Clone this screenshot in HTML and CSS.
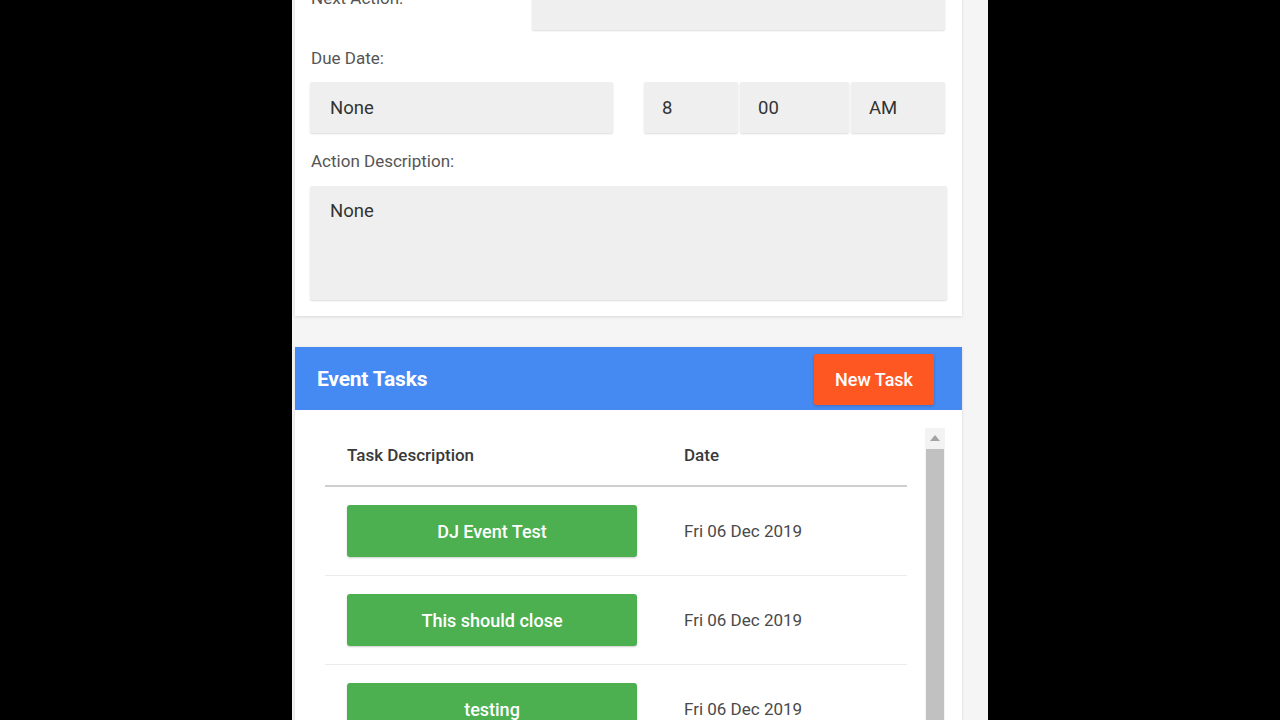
FILE: index.html
```html
<!DOCTYPE html>
<html lang="en">
<head>
  <meta charset="UTF-8" />
  <meta name="viewport" content="width=device-width, initial-scale=1" />
  <title>Event Details</title>
  <link rel="stylesheet" href="styles.css">
</head>
<body>
  <div class="page">
    <div class="stack">

      <section class="card action-card">
        <div class="next-row">
          <label class="field-label inline">Next Action:</label>
          <div class="input next-input"></div>
        </div>

        <label class="field-label">Due Date:</label>
        <div class="due-row">
          <div class="input date-input">None</div>
          <div class="time-group">
            <div class="input time-hour">8</div>
            <div class="input time-min">00</div>
            <div class="input time-ampm">AM</div>
          </div>
        </div>

        <label class="field-label">Action Description:</label>
        <div class="input textarea">None</div>
      </section>

      <section class="card tasks-card">
        <header class="tasks-head">
          <h2>Event Tasks</h2>
          <button class="new-task-btn">New Task</button>
        </header>

        <div class="tasks-body">
          <div class="table-wrap">
            <table>
              <thead>
                <tr>
                  <th class="col-desc">Task Description</th>
                  <th>Date</th>
                </tr>
              </thead>
              <tbody>
                <tr>
                  <td class="col-desc"><button class="task-btn">DJ Event Test</button></td>
                  <td>Fri 06 Dec 2019</td>
                </tr>
                <tr>
                  <td class="col-desc"><button class="task-btn">This should close</button></td>
                  <td>Fri 06 Dec 2019</td>
                </tr>
                <tr>
                  <td class="col-desc"><button class="task-btn">testing</button></td>
                  <td>Fri 06 Dec 2019</td>
                </tr>
                <tr>
                  <td class="col-desc"><button class="task-btn">Sound check</button></td>
                  <td>Fri 06 Dec 2019</td>
                </tr>
              </tbody>
            </table>
          </div>

          <div class="scrollbar">
            <span class="scroll-arrow"></span>
            <span class="scroll-thumb"></span>
          </div>
        </div>
      </section>

    </div>
  </div>
</body>
</html>
```

FILE: styles.css
```css
body {
  font-family: Roboto, 'Noto Sans', sans-serif;
  margin: 0;
  background: #000;
  overflow: hidden;
}

.page {
  box-sizing: border-box;
  width: 696px;
  min-height: 100vh;
  margin: 0 auto;
  padding: 0 26px 0 3px;
  background: #f5f5f5;
}

.stack {
  display: flex;
  flex-direction: column;
  gap: 31px;
  margin-top: -37px;
}

.card {
  background: white;
  box-shadow: 0 1px 3px rgba(0,0,0,0.12);
}

/* action form */

.action-card {
  display: flex;
  flex-direction: column;
  padding: 16px 15px 16px 15px;
}

.field-label {
  display: block;
  font-size: 17px;
  line-height: 20px;
  color: #555;
  margin: 18px 0 14px 1px;
}

.field-label.inline {
  margin: 9px 0 0 1px;
}

.next-row {
  display: flex;
  justify-content: space-between;
  align-items: flex-start;
}

.input {
  box-sizing: border-box;
  height: 51px;
  display: flex;
  align-items: center;
  padding: 0 20px;
  background: #efefef;
  border-radius: 2px;
  box-shadow: 0 1px 2px rgba(0,0,0,0.14);
  font-size: 18.5px;
  color: #333;
}

.next-input {
  width: 413px;
  margin-right: 2px;
}

.due-row {
  display: flex;
  justify-content: space-between;
}

.date-input {
  width: 303px;
}

.time-group {
  display: flex;
  gap: 2px;
  margin-right: 2px;
}

.time-hour,
.time-ampm {
  width: 94px;
  padding: 0 18px;
}

.time-min {
  width: 109px;
  padding: 0 18px;
}

.textarea {
  height: 114px;
  align-items: flex-start;
  padding-top: 14px;
  margin-top: 1px;
}

/* tasks */

.tasks-head {
  display: flex;
  justify-content: space-between;
  align-items: center;
  height: 63px;
  padding: 0 28px 0 22px;
  background: #4589f2;
}

.tasks-head h2 {
  margin: 0;
  color: white;
  font-size: 21px;
  font-weight: 700;
  letter-spacing: -0.2px;
}

.new-task-btn {
  width: 120px;
  height: 51px;
  margin-top: 2px;
  border: none;
  border-radius: 2px;
  background: #ff5722;
  color: #fff;
  font-family: inherit;
  font-size: 18px;
  font-weight: 500;
  box-shadow: 0 1px 3px rgba(0,0,0,0.2);
  cursor: pointer;
}

.tasks-body {
  display: flex;
  height: 340px;
  padding: 18px 17px 0 30px;
  overflow: hidden;
}

.table-wrap {
  flex: 1;
  padding-right: 18px;
}

table {
  width: 100%;
  border-collapse: collapse;
}

th, td {
  text-align: left;
  padding: 18px 22px;
  font-size: 17px;
  line-height: 20px;
}

th {
  padding-top: 17px;
  padding-bottom: 20px;
  font-weight: 500;
  color: #3a3a3a;
  border-bottom: 2px solid #cfcfcf;
}

td {
  color: #4a4a4a;
  border-bottom: 1px solid #ececec;
}

.col-desc {
  width: 293px;
}

.task-btn {
  display: block;
  width: 290px;
  height: 52px;
  border: none;
  border-radius: 3px;
  background: #4caf50;
  color: white;
  font-family: inherit;
  font-size: 18px;
  font-weight: 500;
  box-shadow: 0 1px 2px rgba(0,0,0,0.2);
  cursor: pointer;
}

.scrollbar {
  display: flex;
  flex-direction: column;
  align-items: center;
  width: 20px;
  background: #f3f3f3;
}

.scroll-arrow {
  width: 0;
  height: 0;
  margin: 7px 0 8px;
  border-left: 5px solid transparent;
  border-right: 5px solid transparent;
  border-bottom: 6px solid #a3a3a3;
}

.scroll-thumb {
  width: 18px;
  flex: 1;
  background: #c1c1c1;
}
```
